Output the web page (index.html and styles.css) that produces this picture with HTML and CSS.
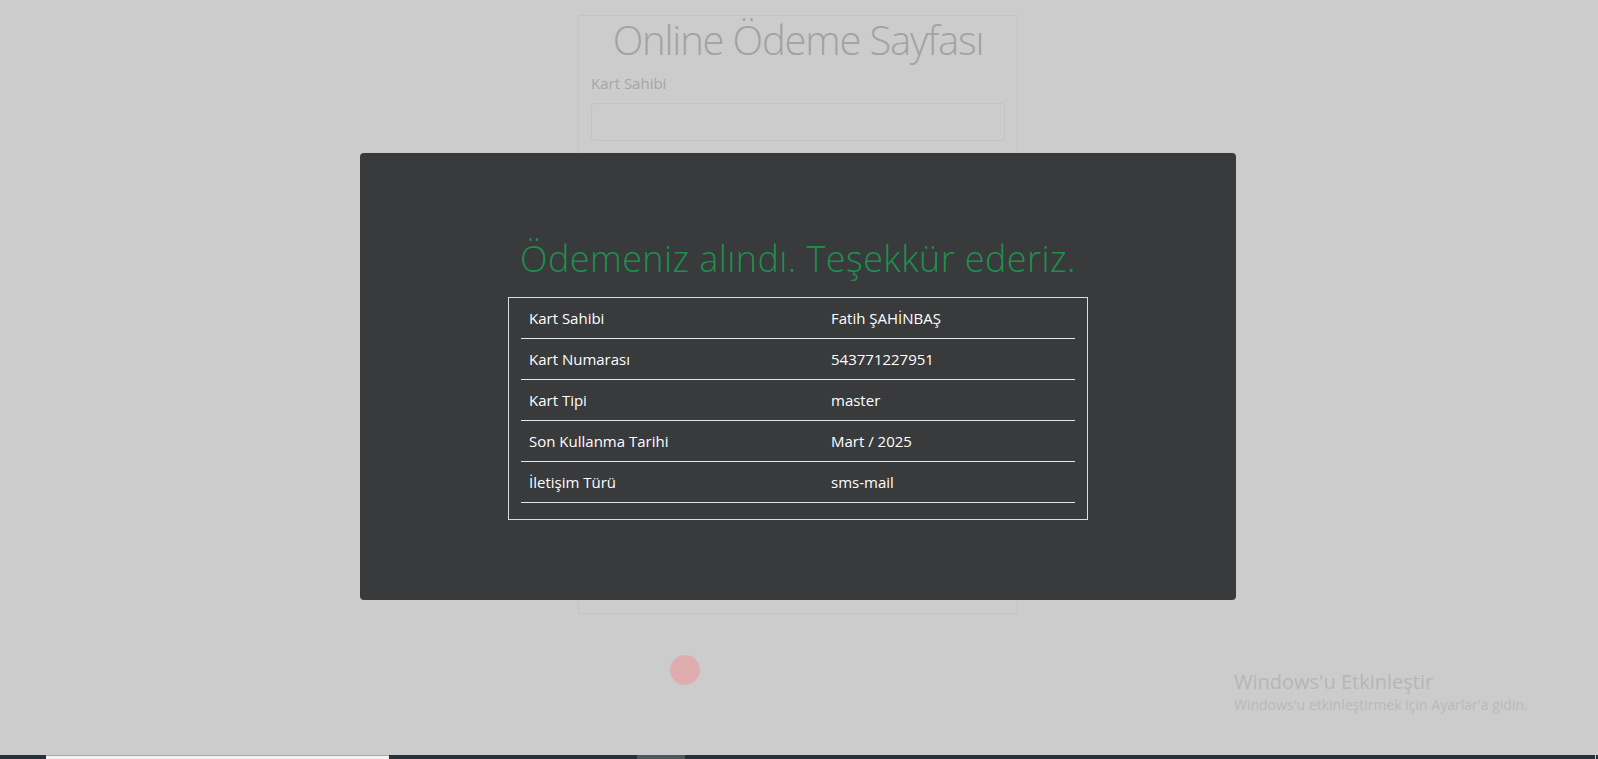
FILE: index.html
```html
<!DOCTYPE html>
<html lang="tr">
<head>
<meta charset="utf-8">
<title>Online Ödeme Sayfası</title>
<link rel="stylesheet" href="styles.css">
</head>
<body>
<div class="screen">
  <main class="page">
    <section class="card">
      <h1 class="card-title">Online Ödeme Sayfası</h1>
      <label class="field-label">Kart Sahibi</label>
      <div class="field-input"></div>
    </section>
    <span class="dot"></span>

    <div class="modal">
      <h2 class="modal-title">Ödemeniz alındı. Teşekkür ederiz.</h2>
      <div class="summary">
        <table class="summary-table">
          <tr><td class="key">Kart Sahibi</td><td>Fatih ŞAHİNBAŞ</td></tr>
          <tr><td class="key">Kart Numarası</td><td>543771227951</td></tr>
          <tr><td class="key">Kart Tipi</td><td>master</td></tr>
          <tr><td class="key">Son Kullanma Tarihi</td><td>Mart / 2025</td></tr>
          <tr><td class="key">İletişim Türü</td><td>sms-mail</td></tr>
        </table>
      </div>
    </div>

    <div class="watermark">
      <div class="wm-title">Windows'u Etkinleştir</div>
      <div class="wm-sub">Windows'u etkinleştirmek için Ayarlar'a gidin.</div>
    </div>
  </main>
  <footer class="taskbar">
    <span class="seg seg-a"></span>
    <span class="seg seg-white"></span>
    <span class="seg seg-b"></span>
    <span class="seg seg-gray"></span>
    <span class="seg seg-c"></span>
    <span class="seg seg-end"></span>
    <span class="seg seg-d"></span>
  </footer>
</div>
</body>
</html>
```

FILE: styles.css
```css
html, body {
  margin: 0;
  padding: 0;
  height: 759px;
  overflow: hidden;
}

body {
  font-family: "Segoe UI", "Open Sans", "Noto Sans", sans-serif;
  background: #cccccc;
}

.screen {
  display: flex;
  flex-direction: column;
  height: 759px;
}

.page {
  position: relative;
  flex: 1;
  background: #cccccc;
  display: flex;
  justify-content: center;
  align-items: flex-start;
}

.card {
  box-sizing: border-box;
  width: 440px;
  height: 599px;
  margin-top: 15px;
  margin-right: 2px;
  border: 1px solid #c4c4c4;
  padding: 0 12px;
}

.card-title {
  margin: 0;
  font-weight: 300;
  font-size: 40px;
  line-height: 48px;
  letter-spacing: -1.2px;
  text-align: center;
  color: #a2a2a2;
}

.field-label {
  display: block;
  margin-top: 7px;
  font-size: 15px;
  line-height: 24px;
  color: #a6a6a6;
}

.field-input {
  margin-top: 8px;
  height: 36px;
  border: 1px solid #c3c3c3;
  border-radius: 3px;
}

.dot {
  position: absolute;
  left: 670px;
  top: 655px;
  width: 30px;
  height: 30px;
  border-radius: 50%;
  background: #e0adae;
}

.modal {
  position: absolute;
  left: 360px;
  top: 153px;
  width: 876px;
  box-sizing: border-box;
  padding: 84px 0 80px;
  background: #393a3c;
  border-radius: 4px;
}

.modal-title {
  margin: 0 0 16px;
  font-weight: 300;
  font-size: 36px;
  line-height: 44px;
  letter-spacing: 0.4px;
  text-align: center;
  color: #1f8f4e;
}

.summary {
  width: 580px;
  box-sizing: border-box;
  margin: 0 auto;
  border: 1px solid #dcdcdc;
  padding: 0 12px;
}

.summary-table {
  width: 100%;
  border-collapse: collapse;
  margin-bottom: 16px;
  color: #ffffff;
  font-size: 15px;
}

.summary-table td {
  padding: 8px;
  line-height: 24px;
  border-bottom: 1px solid #e6e6e6;
}

.summary-table td.key {
  width: 286px;
}

.watermark {
  position: absolute;
  left: 1234px;
  top: 669px;
  color: #b6b6b6;
}

.wm-title {
  font-size: 20px;
  line-height: 26px;
}

.wm-sub {
  font-size: 14px;
  line-height: 20px;
  color: #b9b9b9;
}

.taskbar {
  display: flex;
  height: 4px;
  background: #22333b;
}

.seg { display: block; height: 4px; }
.seg-a { width: 46px; background: #22333b; }
.seg-white { width: 343px; background: #f0f0f0; box-shadow: inset 0 1px 0 #a9a9a9; }
.seg-b { width: 248px; background: #22333b; }
.seg-gray { width: 48px; background: #4b575c; }
.seg-c { flex: 1; background: #22333b; }
.seg-end { width: 1px; background: #bfbfbf; }
.seg-d { width: 2px; background: #22333b; }
```
